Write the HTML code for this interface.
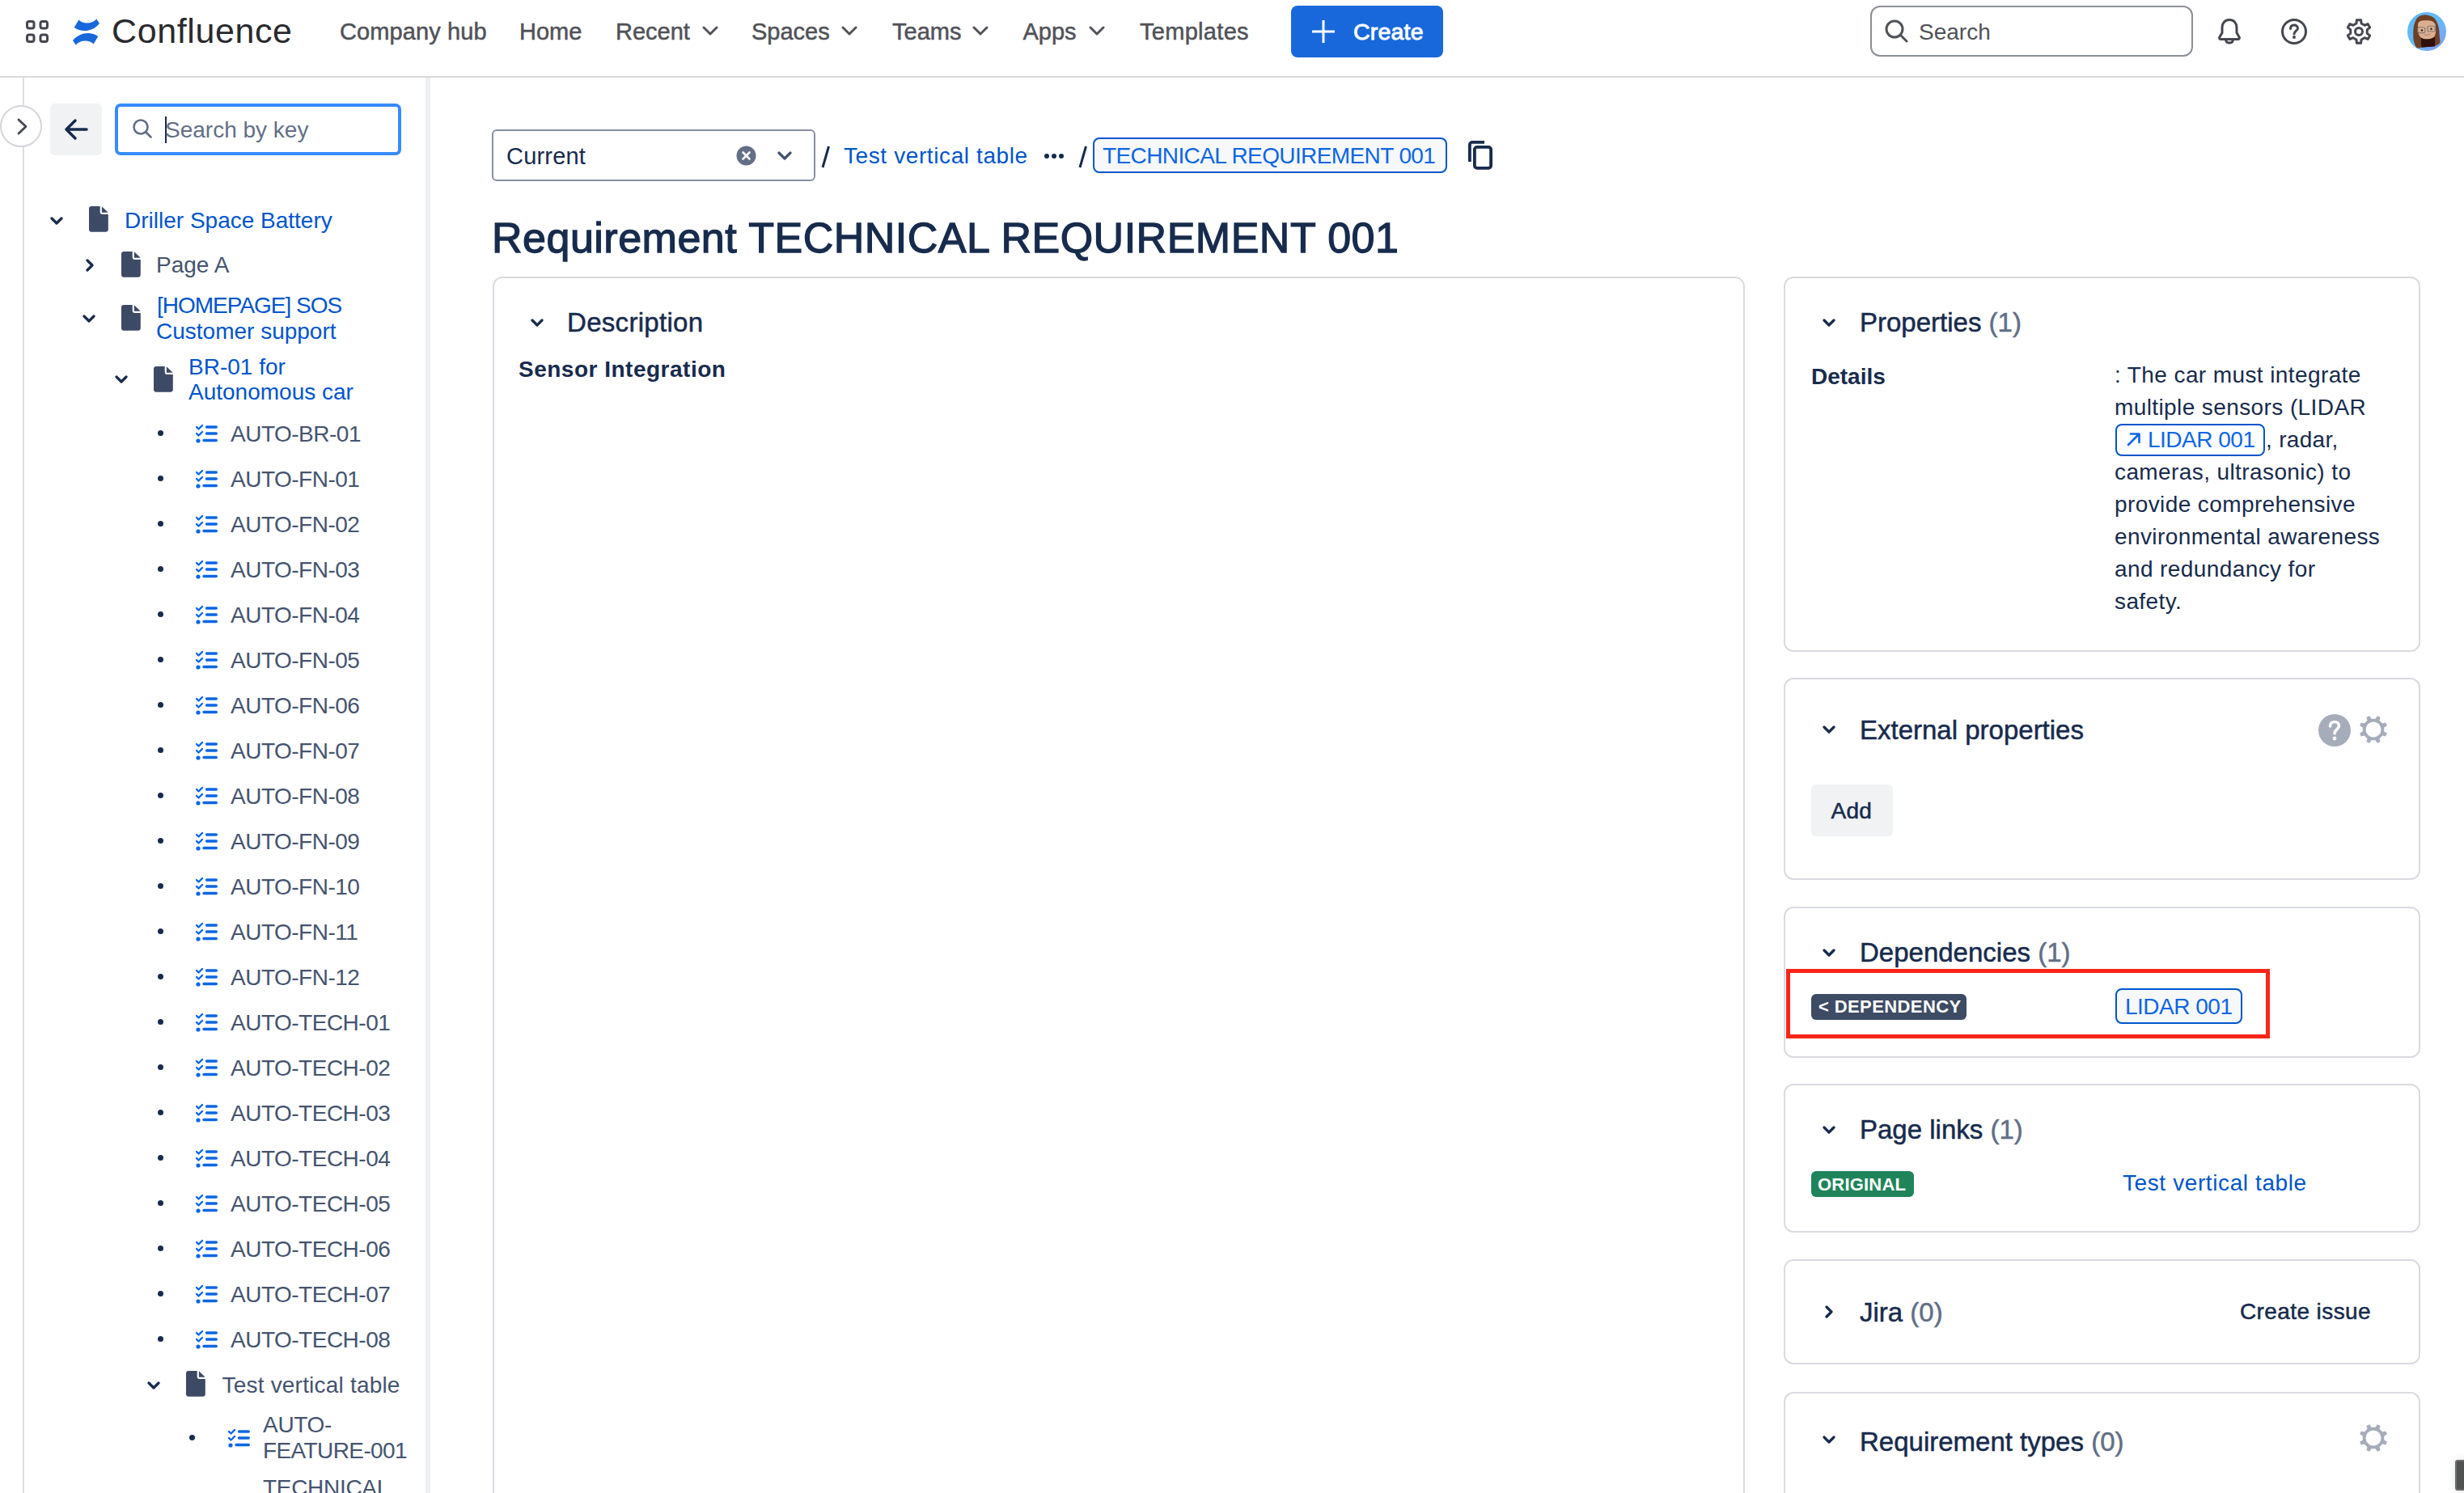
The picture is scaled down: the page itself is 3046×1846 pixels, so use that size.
<!DOCTYPE html>
<html><head><meta charset="utf-8">
<style>
html,body{margin:0;padding:0;background:#ffffff;}
html{overflow:hidden;}
body{width:3046px;height:1846px;position:relative;overflow:hidden;font-family:"Liberation Sans",sans-serif;}
.t{position:absolute;white-space:nowrap;}
.b{position:absolute;}
</style></head><body>
<div class="b" style="left:0px;top:94px;width:3046px;height:2px;background:#dadada"></div>
<svg class="b" style="left:32px;top:25px;" width="28" height="28" viewBox="0 0 28 28"><rect x="1.5" y="1.5" width="8.5" height="8.5" rx="2.5" fill="none" stroke="#44474f" stroke-width="3"/><rect x="18.0" y="1.5" width="8.5" height="8.5" rx="2.5" fill="none" stroke="#44474f" stroke-width="3"/><rect x="1.5" y="18.0" width="8.5" height="8.5" rx="2.5" fill="none" stroke="#44474f" stroke-width="3"/><rect x="18.0" y="18.0" width="8.5" height="8.5" rx="2.5" fill="none" stroke="#44474f" stroke-width="3"/></svg>
<svg class="b" style="left:90px;top:23px;" width="34" height="33" viewBox="0 0 34 33"><path id="lg" d="M7.4 1.4 C 12 7, 24 7, 29.3 0.5 L 33 6 C 24 17, 10 17, 1.7 11 Z" fill="#1868db"/><path d="M7.4 1.4 C 12 7, 24 7, 29.3 0.5 L 33 6 C 24 17, 10 17, 1.7 11 Z" fill="#1868db" transform="rotate(180 16.5 16.5)"/></svg>
<div class="t" style="left:138px;top:17.2px;font-size:43px;line-height:43px;color:#292a2e;font-weight:400;letter-spacing:0.6px">Confluence</div>
<div class="t" style="left:420px;top:24.7px;font-size:29px;line-height:29px;color:#505258;font-weight:400;-webkit-text-stroke:0.5px;letter-spacing:0.1px">Company hub</div>
<div class="t" style="left:642px;top:24.7px;font-size:29px;line-height:29px;color:#505258;font-weight:400;-webkit-text-stroke:0.5px;">Home</div>
<div class="t" style="left:761px;top:24.7px;font-size:29px;line-height:29px;color:#505258;font-weight:400;-webkit-text-stroke:0.5px;">Recent</div>
<div class="t" style="left:929px;top:24.7px;font-size:29px;line-height:29px;color:#505258;font-weight:400;-webkit-text-stroke:0.5px;">Spaces</div>
<div class="t" style="left:1103px;top:24.7px;font-size:29px;line-height:29px;color:#505258;font-weight:400;-webkit-text-stroke:0.5px;">Teams</div>
<div class="t" style="left:1264.5px;top:24.7px;font-size:29px;line-height:29px;color:#505258;font-weight:400;-webkit-text-stroke:0.5px;">Apps</div>
<div class="t" style="left:1409px;top:24.7px;font-size:29px;line-height:29px;color:#505258;font-weight:400;-webkit-text-stroke:0.5px;letter-spacing:0.3px">Templates</div>
<svg class="b" style="left:868px;top:32px;" width="20" height="12" viewBox="0 0 20 12"><path d="M2 2 L10 10 L18 2" fill="none" stroke="#505258" stroke-width="3" stroke-linecap="round" stroke-linejoin="round"/></svg>
<svg class="b" style="left:1040px;top:32px;" width="20" height="12" viewBox="0 0 20 12"><path d="M2 2 L10 10 L18 2" fill="none" stroke="#505258" stroke-width="3" stroke-linecap="round" stroke-linejoin="round"/></svg>
<svg class="b" style="left:1202px;top:32px;" width="20" height="12" viewBox="0 0 20 12"><path d="M2 2 L10 10 L18 2" fill="none" stroke="#505258" stroke-width="3" stroke-linecap="round" stroke-linejoin="round"/></svg>
<svg class="b" style="left:1346px;top:32px;" width="20" height="12" viewBox="0 0 20 12"><path d="M2 2 L10 10 L18 2" fill="none" stroke="#505258" stroke-width="3" stroke-linecap="round" stroke-linejoin="round"/></svg>
<div class="b" style="left:1596px;top:7px;width:188px;height:64px;background:#1868db;border-radius:8px"></div>
<svg class="b" style="left:1622px;top:25px;" width="28" height="28" viewBox="0 0 28 28"><path d="M14 0 V28 M0 14 H28" stroke="#fff" stroke-width="3"/></svg>
<div class="t" style="left:1673px;top:24.7px;font-size:28.5px;line-height:28.5px;color:#ffffff;font-weight:400;-webkit-text-stroke:0.9px;letter-spacing:0.2px">Create</div>
<div class="b" style="left:2312px;top:7px;width:399px;height:63px;border:2px solid #8c8f97;border-radius:12px;box-sizing:border-box"></div>
<svg class="b" style="left:2330px;top:24px;" width="30" height="30" viewBox="0 0 30 30"><circle cx="12" cy="12" r="10" fill="none" stroke="#505258" stroke-width="3"/><path d="M19.5 19.5 L27 27" stroke="#505258" stroke-width="3" stroke-linecap="round"/></svg>
<div class="t" style="left:2372px;top:25.8px;font-size:28px;line-height:28px;color:#505258;font-weight:400;">Search</div>
<svg class="b" style="left:2742px;top:23px;" width="28" height="32" viewBox="0 0 28 32"><path d="M14 1.5 C 8.5 1.5, 5 5.5, 5 11 V 17.5 L 1.8 23 C 1.2 24.2, 2 25.5, 3.3 25.5 H 24.7 C 26 25.5, 26.8 24.2, 26.2 23 L 23 17.5 V 11 C 23 5.5, 19.5 1.5, 14 1.5 Z" fill="none" stroke="#44474f" stroke-width="3" stroke-linejoin="round"/><path d="M9.8 27.3 C 10.5 31, 17.5 31, 18.2 27.3" fill="none" stroke="#44474f" stroke-width="3" stroke-linecap="round"/></svg>
<svg class="b" style="left:2820px;top:23px;" width="32" height="32" viewBox="0 0 32 32"><circle cx="16" cy="16" r="14.5" fill="none" stroke="#44474f" stroke-width="3"/><path d="M11.5 12.5 C 11.5 9.5, 13.5 8, 16 8 C 18.5 8, 20.5 9.5, 20.5 12 C 20.5 15, 16 15.5, 16 19" fill="none" stroke="#44474f" stroke-width="3" stroke-linecap="round"/><circle cx="16" cy="23" r="2" fill="#44474f"/></svg>
<svg class="b" style="left:2900px;top:23px;" width="32" height="32" viewBox="0 0 32 32"><path d="M19.10 26.03 L18.60 30.27 L13.40 30.27 L12.90 26.03 L8.86 23.70 L4.94 25.38 L2.35 20.88 L5.76 18.33 L5.76 13.67 L2.35 11.12 L4.94 6.62 L8.86 8.30 L12.90 5.97 L13.40 1.73 L18.60 1.73 L19.10 5.97 L23.14 8.30 L27.06 6.62 L29.65 11.12 L26.24 13.67 L26.24 18.33 L29.65 20.88 L27.06 25.38 L23.14 23.70 Z" fill="none" stroke="#44474f" stroke-width="3" stroke-linejoin="round"/><circle cx="16" cy="16" r="4.5" fill="none" stroke="#44474f" stroke-width="3"/></svg>
<svg class="b" style="left:2976px;top:15px;" width="48" height="48" viewBox="0 0 48 48"><defs><linearGradient id="avg" x1="0" y1="0" x2="1" y2="1"><stop offset="0" stop-color="#62b6fa"/><stop offset="0.5" stop-color="#63bafa"/><stop offset="1" stop-color="#8d98f6"/></linearGradient><clipPath id="avc"><circle cx="24" cy="24" r="24"/></clipPath></defs><circle cx="24" cy="24" r="24" fill="url(#avg)"/><g clip-path="url(#avc)"><path d="M22 3.2 C 15 3.5, 11 7, 10 11 C 7 17, 7.3 24, 7.3 28 C 7 35, 9 41, 12 44.4 L 22 43.2 L 33 42 C 37 41, 40 39, 40.6 37.2 C 40 32, 39.4 27, 39.4 23 C 38.5 18, 37.5 14, 36.2 12.3 C 35 8, 31 4, 22 3.2 Z" fill="#6e4024"/><path d="M16.9 32 C 17 38, 17 42, 18 43.5 L 34 42.5 C 34.2 38, 34.2 34, 34 31 Z" fill="#2e0f0a"/><path d="M13 16 C 13 11, 17 10.3, 23 10.3 C 30 10.3, 35 12, 35 18 C 35.5 24, 35 29, 32 31.5 C 29 33.5, 24 33.5, 20 33 C 15 31.5, 13.2 27, 13 22 Z" fill="#dcae90"/><path d="M12 14 C 15 8, 24 6, 34 12 L 37 13 C 33 5, 16 3, 11 13 Z" fill="#6e4024"/><rect x="12.8" y="18.8" width="9" height="6.8" rx="2.2" fill="none" stroke="#7d7a76" stroke-width="1.1"/><rect x="24.8" y="17.2" width="9.5" height="6.8" rx="2.2" fill="none" stroke="#7d7a76" stroke-width="1.1"/><circle cx="18" cy="22.5" r="1.3" fill="#2a2a2a"/><circle cx="29.5" cy="20.8" r="1.3" fill="#2a2a2a"/><path d="M20.5 27.5 C 23 28.8, 26 28.5, 28.5 27" fill="none" stroke="#b07d64" stroke-width="1"/></g></svg>
<div class="b" style="left:28px;top:96px;width:1px;height:1750px;background:#dadada"></div>
<div class="b" style="left:29px;top:96px;width:1px;height:1750px;background:#e3e3e3"></div>
<div class="b" style="left:526px;top:96px;width:6px;height:1750px;background:#eeeff1"></div>
<div class="b" style="left:0px;top:130px;width:52px;height:52px;border-radius:50%;border:2px solid #d4d6da;background:#fff;box-sizing:border-box"></div>
<svg class="b" style="left:21px;top:146px;" width="13" height="21" viewBox="0 0 13 21"><path d="M2 2 L11 10.5 L2 19" fill="none" stroke="#44474f" stroke-width="2.8" stroke-linecap="round" stroke-linejoin="round"/></svg>
<div class="b" style="left:62px;top:128px;width:64px;height:64px;background:#f1f2f4;border-radius:6px"></div>
<svg class="b" style="left:79px;top:146px;" width="30" height="28" viewBox="0 0 30 28"><path d="M28 14 H3 M14 3 L3 14 L14 25" fill="none" stroke="#172b4d" stroke-width="3.5" stroke-linecap="round" stroke-linejoin="round"/></svg>
<div class="b" style="left:142px;top:128px;width:354px;height:64px;border:4px solid #388bff;border-radius:7px;box-sizing:border-box;background:#fff"></div>
<svg class="b" style="left:163px;top:146px;" width="26" height="26" viewBox="0 0 26 26"><circle cx="11" cy="11" r="8.5" fill="none" stroke="#626f86" stroke-width="2.6"/><path d="M17.5 17.5 L23.5 23.5" stroke="#626f86" stroke-width="2.6" stroke-linecap="round"/></svg>
<div class="b" style="left:204px;top:144px;width:2px;height:33px;background:#172b4d"></div>
<div class="t" style="left:204px;top:146.8px;font-size:28px;line-height:28px;color:#626f86;font-weight:400;">Search by key</div>
<svg class="b" style="left:62px;top:268px;" width="16" height="11" viewBox="0 0 16 11"><path d="M2 2 L8 8 L14 2" fill="none" stroke="#172b4d" stroke-width="3.2" stroke-linecap="round" stroke-linejoin="round"/></svg>
<svg class="b" style="left:110px;top:255px;" width="24" height="32" viewBox="0 0 24 32"><path d="M3 0 H13.7 V7 C13.7 8.7 14.9 10 16.6 10 H23.8 V28.8 C23.8 30.5 22.4 31.8 20.8 31.8 H3 C1.3 31.8 0 30.5 0 28.8 V3 C0 1.3 1.3 0 3 0 Z" fill="#3c4a65"/><path d="M15.9 0.2 L23.7 7.8 H15.9 Z" fill="#3c4a65"/></svg>
<div class="t" style="left:154px;top:258.8px;font-size:28px;line-height:28px;color:#0055cc;font-weight:400;">Driller Space Battery</div>
<svg class="b" style="left:106px;top:320px;" width="11" height="16" viewBox="0 0 11 16"><path d="M2 2 L8 8 L2 14" fill="none" stroke="#172b4d" stroke-width="3.2" stroke-linecap="round" stroke-linejoin="round"/></svg>
<svg class="b" style="left:150px;top:311px;" width="24" height="32" viewBox="0 0 24 32"><path d="M3 0 H13.7 V7 C13.7 8.7 14.9 10 16.6 10 H23.8 V28.8 C23.8 30.5 22.4 31.8 20.8 31.8 H3 C1.3 31.8 0 30.5 0 28.8 V3 C0 1.3 1.3 0 3 0 Z" fill="#3c4a65"/><path d="M15.9 0.2 L23.7 7.8 H15.9 Z" fill="#3c4a65"/></svg>
<div class="t" style="left:193px;top:314.0px;font-size:28px;line-height:28px;color:#44546f;font-weight:400;">Page A</div>
<svg class="b" style="left:102px;top:389px;" width="16" height="11" viewBox="0 0 16 11"><path d="M2 2 L8 8 L14 2" fill="none" stroke="#172b4d" stroke-width="3.2" stroke-linecap="round" stroke-linejoin="round"/></svg>
<svg class="b" style="left:150px;top:377px;" width="24" height="32" viewBox="0 0 24 32"><path d="M3 0 H13.7 V7 C13.7 8.7 14.9 10 16.6 10 H23.8 V28.8 C23.8 30.5 22.4 31.8 20.8 31.8 H3 C1.3 31.8 0 30.5 0 28.8 V3 C0 1.3 1.3 0 3 0 Z" fill="#3c4a65"/><path d="M15.9 0.2 L23.7 7.8 H15.9 Z" fill="#3c4a65"/></svg>
<div class="t" style="left:194px;top:364.1px;font-size:28px;line-height:28px;color:#0055cc;font-weight:400;letter-spacing:-1px">[HOMEPAGE] SOS</div>
<div class="t" style="left:193px;top:395.6px;font-size:28px;line-height:28px;color:#0055cc;font-weight:400;">Customer support</div>
<svg class="b" style="left:142px;top:464px;" width="16" height="11" viewBox="0 0 16 11"><path d="M2 2 L8 8 L14 2" fill="none" stroke="#172b4d" stroke-width="3.2" stroke-linecap="round" stroke-linejoin="round"/></svg>
<svg class="b" style="left:190px;top:453px;" width="24" height="32" viewBox="0 0 24 32"><path d="M3 0 H13.7 V7 C13.7 8.7 14.9 10 16.6 10 H23.8 V28.8 C23.8 30.5 22.4 31.8 20.8 31.8 H3 C1.3 31.8 0 30.5 0 28.8 V3 C0 1.3 1.3 0 3 0 Z" fill="#3c4a65"/><path d="M15.9 0.2 L23.7 7.8 H15.9 Z" fill="#3c4a65"/></svg>
<div class="t" style="left:233px;top:439.9px;font-size:28px;line-height:28px;color:#0055cc;font-weight:400;">BR-01 for</div>
<div class="t" style="left:233px;top:471.3px;font-size:28px;line-height:28px;color:#0055cc;font-weight:400;">Autonomous car</div>
<div class="b" style="left:194.5px;top:532.2px;width:7px;height:7px;border-radius:50%;background:#172b4d"></div>
<svg class="b" style="left:242px;top:524.2px;" width="28" height="24" viewBox="0 0 28 24"><path d="M1 4 L3.5 6.5 L8 2 M1 12 L3.5 14.5 L8 10" fill="none" stroke="#0c66e4" stroke-width="2.4" stroke-linecap="round" stroke-linejoin="round"/><circle cx="3" cy="21" r="2.6" fill="#0c66e4"/><path d="M13.5 4 H25.3 M13.5 12 H25.3 M10 20.5 H25.3" stroke="#0c66e4" stroke-width="3.4" stroke-linecap="round"/></svg>
<div class="t" style="left:285px;top:522.5px;font-size:28px;line-height:28px;color:#44546f;font-weight:400;letter-spacing:-0.5px">AUTO-BR-01</div>
<div class="b" style="left:194.5px;top:588.2px;width:7px;height:7px;border-radius:50%;background:#172b4d"></div>
<svg class="b" style="left:242px;top:580.2px;" width="28" height="24" viewBox="0 0 28 24"><path d="M1 4 L3.5 6.5 L8 2 M1 12 L3.5 14.5 L8 10" fill="none" stroke="#0c66e4" stroke-width="2.4" stroke-linecap="round" stroke-linejoin="round"/><circle cx="3" cy="21" r="2.6" fill="#0c66e4"/><path d="M13.5 4 H25.3 M13.5 12 H25.3 M10 20.5 H25.3" stroke="#0c66e4" stroke-width="3.4" stroke-linecap="round"/></svg>
<div class="t" style="left:285px;top:578.5px;font-size:28px;line-height:28px;color:#44546f;font-weight:400;letter-spacing:-0.5px">AUTO-FN-01</div>
<div class="b" style="left:194.5px;top:644.2px;width:7px;height:7px;border-radius:50%;background:#172b4d"></div>
<svg class="b" style="left:242px;top:636.2px;" width="28" height="24" viewBox="0 0 28 24"><path d="M1 4 L3.5 6.5 L8 2 M1 12 L3.5 14.5 L8 10" fill="none" stroke="#0c66e4" stroke-width="2.4" stroke-linecap="round" stroke-linejoin="round"/><circle cx="3" cy="21" r="2.6" fill="#0c66e4"/><path d="M13.5 4 H25.3 M13.5 12 H25.3 M10 20.5 H25.3" stroke="#0c66e4" stroke-width="3.4" stroke-linecap="round"/></svg>
<div class="t" style="left:285px;top:634.5px;font-size:28px;line-height:28px;color:#44546f;font-weight:400;letter-spacing:-0.5px">AUTO-FN-02</div>
<div class="b" style="left:194.5px;top:700.2px;width:7px;height:7px;border-radius:50%;background:#172b4d"></div>
<svg class="b" style="left:242px;top:692.2px;" width="28" height="24" viewBox="0 0 28 24"><path d="M1 4 L3.5 6.5 L8 2 M1 12 L3.5 14.5 L8 10" fill="none" stroke="#0c66e4" stroke-width="2.4" stroke-linecap="round" stroke-linejoin="round"/><circle cx="3" cy="21" r="2.6" fill="#0c66e4"/><path d="M13.5 4 H25.3 M13.5 12 H25.3 M10 20.5 H25.3" stroke="#0c66e4" stroke-width="3.4" stroke-linecap="round"/></svg>
<div class="t" style="left:285px;top:690.5px;font-size:28px;line-height:28px;color:#44546f;font-weight:400;letter-spacing:-0.5px">AUTO-FN-03</div>
<div class="b" style="left:194.5px;top:756.2px;width:7px;height:7px;border-radius:50%;background:#172b4d"></div>
<svg class="b" style="left:242px;top:748.2px;" width="28" height="24" viewBox="0 0 28 24"><path d="M1 4 L3.5 6.5 L8 2 M1 12 L3.5 14.5 L8 10" fill="none" stroke="#0c66e4" stroke-width="2.4" stroke-linecap="round" stroke-linejoin="round"/><circle cx="3" cy="21" r="2.6" fill="#0c66e4"/><path d="M13.5 4 H25.3 M13.5 12 H25.3 M10 20.5 H25.3" stroke="#0c66e4" stroke-width="3.4" stroke-linecap="round"/></svg>
<div class="t" style="left:285px;top:746.5px;font-size:28px;line-height:28px;color:#44546f;font-weight:400;letter-spacing:-0.5px">AUTO-FN-04</div>
<div class="b" style="left:194.5px;top:812.2px;width:7px;height:7px;border-radius:50%;background:#172b4d"></div>
<svg class="b" style="left:242px;top:804.2px;" width="28" height="24" viewBox="0 0 28 24"><path d="M1 4 L3.5 6.5 L8 2 M1 12 L3.5 14.5 L8 10" fill="none" stroke="#0c66e4" stroke-width="2.4" stroke-linecap="round" stroke-linejoin="round"/><circle cx="3" cy="21" r="2.6" fill="#0c66e4"/><path d="M13.5 4 H25.3 M13.5 12 H25.3 M10 20.5 H25.3" stroke="#0c66e4" stroke-width="3.4" stroke-linecap="round"/></svg>
<div class="t" style="left:285px;top:802.5px;font-size:28px;line-height:28px;color:#44546f;font-weight:400;letter-spacing:-0.5px">AUTO-FN-05</div>
<div class="b" style="left:194.5px;top:868.2px;width:7px;height:7px;border-radius:50%;background:#172b4d"></div>
<svg class="b" style="left:242px;top:860.2px;" width="28" height="24" viewBox="0 0 28 24"><path d="M1 4 L3.5 6.5 L8 2 M1 12 L3.5 14.5 L8 10" fill="none" stroke="#0c66e4" stroke-width="2.4" stroke-linecap="round" stroke-linejoin="round"/><circle cx="3" cy="21" r="2.6" fill="#0c66e4"/><path d="M13.5 4 H25.3 M13.5 12 H25.3 M10 20.5 H25.3" stroke="#0c66e4" stroke-width="3.4" stroke-linecap="round"/></svg>
<div class="t" style="left:285px;top:858.5px;font-size:28px;line-height:28px;color:#44546f;font-weight:400;letter-spacing:-0.5px">AUTO-FN-06</div>
<div class="b" style="left:194.5px;top:924.2px;width:7px;height:7px;border-radius:50%;background:#172b4d"></div>
<svg class="b" style="left:242px;top:916.2px;" width="28" height="24" viewBox="0 0 28 24"><path d="M1 4 L3.5 6.5 L8 2 M1 12 L3.5 14.5 L8 10" fill="none" stroke="#0c66e4" stroke-width="2.4" stroke-linecap="round" stroke-linejoin="round"/><circle cx="3" cy="21" r="2.6" fill="#0c66e4"/><path d="M13.5 4 H25.3 M13.5 12 H25.3 M10 20.5 H25.3" stroke="#0c66e4" stroke-width="3.4" stroke-linecap="round"/></svg>
<div class="t" style="left:285px;top:914.5px;font-size:28px;line-height:28px;color:#44546f;font-weight:400;letter-spacing:-0.5px">AUTO-FN-07</div>
<div class="b" style="left:194.5px;top:980.2px;width:7px;height:7px;border-radius:50%;background:#172b4d"></div>
<svg class="b" style="left:242px;top:972.2px;" width="28" height="24" viewBox="0 0 28 24"><path d="M1 4 L3.5 6.5 L8 2 M1 12 L3.5 14.5 L8 10" fill="none" stroke="#0c66e4" stroke-width="2.4" stroke-linecap="round" stroke-linejoin="round"/><circle cx="3" cy="21" r="2.6" fill="#0c66e4"/><path d="M13.5 4 H25.3 M13.5 12 H25.3 M10 20.5 H25.3" stroke="#0c66e4" stroke-width="3.4" stroke-linecap="round"/></svg>
<div class="t" style="left:285px;top:970.5px;font-size:28px;line-height:28px;color:#44546f;font-weight:400;letter-spacing:-0.5px">AUTO-FN-08</div>
<div class="b" style="left:194.5px;top:1036.2px;width:7px;height:7px;border-radius:50%;background:#172b4d"></div>
<svg class="b" style="left:242px;top:1028.2px;" width="28" height="24" viewBox="0 0 28 24"><path d="M1 4 L3.5 6.5 L8 2 M1 12 L3.5 14.5 L8 10" fill="none" stroke="#0c66e4" stroke-width="2.4" stroke-linecap="round" stroke-linejoin="round"/><circle cx="3" cy="21" r="2.6" fill="#0c66e4"/><path d="M13.5 4 H25.3 M13.5 12 H25.3 M10 20.5 H25.3" stroke="#0c66e4" stroke-width="3.4" stroke-linecap="round"/></svg>
<div class="t" style="left:285px;top:1026.5px;font-size:28px;line-height:28px;color:#44546f;font-weight:400;letter-spacing:-0.5px">AUTO-FN-09</div>
<div class="b" style="left:194.5px;top:1092.2px;width:7px;height:7px;border-radius:50%;background:#172b4d"></div>
<svg class="b" style="left:242px;top:1084.2px;" width="28" height="24" viewBox="0 0 28 24"><path d="M1 4 L3.5 6.5 L8 2 M1 12 L3.5 14.5 L8 10" fill="none" stroke="#0c66e4" stroke-width="2.4" stroke-linecap="round" stroke-linejoin="round"/><circle cx="3" cy="21" r="2.6" fill="#0c66e4"/><path d="M13.5 4 H25.3 M13.5 12 H25.3 M10 20.5 H25.3" stroke="#0c66e4" stroke-width="3.4" stroke-linecap="round"/></svg>
<div class="t" style="left:285px;top:1082.5px;font-size:28px;line-height:28px;color:#44546f;font-weight:400;letter-spacing:-0.5px">AUTO-FN-10</div>
<div class="b" style="left:194.5px;top:1148.2px;width:7px;height:7px;border-radius:50%;background:#172b4d"></div>
<svg class="b" style="left:242px;top:1140.2px;" width="28" height="24" viewBox="0 0 28 24"><path d="M1 4 L3.5 6.5 L8 2 M1 12 L3.5 14.5 L8 10" fill="none" stroke="#0c66e4" stroke-width="2.4" stroke-linecap="round" stroke-linejoin="round"/><circle cx="3" cy="21" r="2.6" fill="#0c66e4"/><path d="M13.5 4 H25.3 M13.5 12 H25.3 M10 20.5 H25.3" stroke="#0c66e4" stroke-width="3.4" stroke-linecap="round"/></svg>
<div class="t" style="left:285px;top:1138.5px;font-size:28px;line-height:28px;color:#44546f;font-weight:400;letter-spacing:-0.5px">AUTO-FN-11</div>
<div class="b" style="left:194.5px;top:1204.2px;width:7px;height:7px;border-radius:50%;background:#172b4d"></div>
<svg class="b" style="left:242px;top:1196.2px;" width="28" height="24" viewBox="0 0 28 24"><path d="M1 4 L3.5 6.5 L8 2 M1 12 L3.5 14.5 L8 10" fill="none" stroke="#0c66e4" stroke-width="2.4" stroke-linecap="round" stroke-linejoin="round"/><circle cx="3" cy="21" r="2.6" fill="#0c66e4"/><path d="M13.5 4 H25.3 M13.5 12 H25.3 M10 20.5 H25.3" stroke="#0c66e4" stroke-width="3.4" stroke-linecap="round"/></svg>
<div class="t" style="left:285px;top:1194.5px;font-size:28px;line-height:28px;color:#44546f;font-weight:400;letter-spacing:-0.5px">AUTO-FN-12</div>
<div class="b" style="left:194.5px;top:1260.2px;width:7px;height:7px;border-radius:50%;background:#172b4d"></div>
<svg class="b" style="left:242px;top:1252.2px;" width="28" height="24" viewBox="0 0 28 24"><path d="M1 4 L3.5 6.5 L8 2 M1 12 L3.5 14.5 L8 10" fill="none" stroke="#0c66e4" stroke-width="2.4" stroke-linecap="round" stroke-linejoin="round"/><circle cx="3" cy="21" r="2.6" fill="#0c66e4"/><path d="M13.5 4 H25.3 M13.5 12 H25.3 M10 20.5 H25.3" stroke="#0c66e4" stroke-width="3.4" stroke-linecap="round"/></svg>
<div class="t" style="left:285px;top:1250.5px;font-size:28px;line-height:28px;color:#44546f;font-weight:400;letter-spacing:-0.5px">AUTO-TECH-01</div>
<div class="b" style="left:194.5px;top:1316.2px;width:7px;height:7px;border-radius:50%;background:#172b4d"></div>
<svg class="b" style="left:242px;top:1308.2px;" width="28" height="24" viewBox="0 0 28 24"><path d="M1 4 L3.5 6.5 L8 2 M1 12 L3.5 14.5 L8 10" fill="none" stroke="#0c66e4" stroke-width="2.4" stroke-linecap="round" stroke-linejoin="round"/><circle cx="3" cy="21" r="2.6" fill="#0c66e4"/><path d="M13.5 4 H25.3 M13.5 12 H25.3 M10 20.5 H25.3" stroke="#0c66e4" stroke-width="3.4" stroke-linecap="round"/></svg>
<div class="t" style="left:285px;top:1306.5px;font-size:28px;line-height:28px;color:#44546f;font-weight:400;letter-spacing:-0.5px">AUTO-TECH-02</div>
<div class="b" style="left:194.5px;top:1372.2px;width:7px;height:7px;border-radius:50%;background:#172b4d"></div>
<svg class="b" style="left:242px;top:1364.2px;" width="28" height="24" viewBox="0 0 28 24"><path d="M1 4 L3.5 6.5 L8 2 M1 12 L3.5 14.5 L8 10" fill="none" stroke="#0c66e4" stroke-width="2.4" stroke-linecap="round" stroke-linejoin="round"/><circle cx="3" cy="21" r="2.6" fill="#0c66e4"/><path d="M13.5 4 H25.3 M13.5 12 H25.3 M10 20.5 H25.3" stroke="#0c66e4" stroke-width="3.4" stroke-linecap="round"/></svg>
<div class="t" style="left:285px;top:1362.5px;font-size:28px;line-height:28px;color:#44546f;font-weight:400;letter-spacing:-0.5px">AUTO-TECH-03</div>
<div class="b" style="left:194.5px;top:1428.2px;width:7px;height:7px;border-radius:50%;background:#172b4d"></div>
<svg class="b" style="left:242px;top:1420.2px;" width="28" height="24" viewBox="0 0 28 24"><path d="M1 4 L3.5 6.5 L8 2 M1 12 L3.5 14.5 L8 10" fill="none" stroke="#0c66e4" stroke-width="2.4" stroke-linecap="round" stroke-linejoin="round"/><circle cx="3" cy="21" r="2.6" fill="#0c66e4"/><path d="M13.5 4 H25.3 M13.5 12 H25.3 M10 20.5 H25.3" stroke="#0c66e4" stroke-width="3.4" stroke-linecap="round"/></svg>
<div class="t" style="left:285px;top:1418.5px;font-size:28px;line-height:28px;color:#44546f;font-weight:400;letter-spacing:-0.5px">AUTO-TECH-04</div>
<div class="b" style="left:194.5px;top:1484.2px;width:7px;height:7px;border-radius:50%;background:#172b4d"></div>
<svg class="b" style="left:242px;top:1476.2px;" width="28" height="24" viewBox="0 0 28 24"><path d="M1 4 L3.5 6.5 L8 2 M1 12 L3.5 14.5 L8 10" fill="none" stroke="#0c66e4" stroke-width="2.4" stroke-linecap="round" stroke-linejoin="round"/><circle cx="3" cy="21" r="2.6" fill="#0c66e4"/><path d="M13.5 4 H25.3 M13.5 12 H25.3 M10 20.5 H25.3" stroke="#0c66e4" stroke-width="3.4" stroke-linecap="round"/></svg>
<div class="t" style="left:285px;top:1474.5px;font-size:28px;line-height:28px;color:#44546f;font-weight:400;letter-spacing:-0.5px">AUTO-TECH-05</div>
<div class="b" style="left:194.5px;top:1540.2px;width:7px;height:7px;border-radius:50%;background:#172b4d"></div>
<svg class="b" style="left:242px;top:1532.2px;" width="28" height="24" viewBox="0 0 28 24"><path d="M1 4 L3.5 6.5 L8 2 M1 12 L3.5 14.5 L8 10" fill="none" stroke="#0c66e4" stroke-width="2.4" stroke-linecap="round" stroke-linejoin="round"/><circle cx="3" cy="21" r="2.6" fill="#0c66e4"/><path d="M13.5 4 H25.3 M13.5 12 H25.3 M10 20.5 H25.3" stroke="#0c66e4" stroke-width="3.4" stroke-linecap="round"/></svg>
<div class="t" style="left:285px;top:1530.5px;font-size:28px;line-height:28px;color:#44546f;font-weight:400;letter-spacing:-0.5px">AUTO-TECH-06</div>
<div class="b" style="left:194.5px;top:1596.2px;width:7px;height:7px;border-radius:50%;background:#172b4d"></div>
<svg class="b" style="left:242px;top:1588.2px;" width="28" height="24" viewBox="0 0 28 24"><path d="M1 4 L3.5 6.5 L8 2 M1 12 L3.5 14.5 L8 10" fill="none" stroke="#0c66e4" stroke-width="2.4" stroke-linecap="round" stroke-linejoin="round"/><circle cx="3" cy="21" r="2.6" fill="#0c66e4"/><path d="M13.5 4 H25.3 M13.5 12 H25.3 M10 20.5 H25.3" stroke="#0c66e4" stroke-width="3.4" stroke-linecap="round"/></svg>
<div class="t" style="left:285px;top:1586.5px;font-size:28px;line-height:28px;color:#44546f;font-weight:400;letter-spacing:-0.5px">AUTO-TECH-07</div>
<div class="b" style="left:194.5px;top:1652.2px;width:7px;height:7px;border-radius:50%;background:#172b4d"></div>
<svg class="b" style="left:242px;top:1644.2px;" width="28" height="24" viewBox="0 0 28 24"><path d="M1 4 L3.5 6.5 L8 2 M1 12 L3.5 14.5 L8 10" fill="none" stroke="#0c66e4" stroke-width="2.4" stroke-linecap="round" stroke-linejoin="round"/><circle cx="3" cy="21" r="2.6" fill="#0c66e4"/><path d="M13.5 4 H25.3 M13.5 12 H25.3 M10 20.5 H25.3" stroke="#0c66e4" stroke-width="3.4" stroke-linecap="round"/></svg>
<div class="t" style="left:285px;top:1642.5px;font-size:28px;line-height:28px;color:#44546f;font-weight:400;letter-spacing:-0.5px">AUTO-TECH-08</div>
<svg class="b" style="left:182px;top:1708px;" width="16" height="11" viewBox="0 0 16 11"><path d="M2 2 L8 8 L14 2" fill="none" stroke="#172b4d" stroke-width="3.2" stroke-linecap="round" stroke-linejoin="round"/></svg>
<svg class="b" style="left:230px;top:1695px;" width="24" height="32" viewBox="0 0 24 32"><path d="M3 0 H13.7 V7 C13.7 8.7 14.9 10 16.6 10 H23.8 V28.8 C23.8 30.5 22.4 31.8 20.8 31.8 H3 C1.3 31.8 0 30.5 0 28.8 V3 C0 1.3 1.3 0 3 0 Z" fill="#3c4a65"/><path d="M15.9 0.2 L23.7 7.8 H15.9 Z" fill="#3c4a65"/></svg>
<div class="t" style="left:274.5px;top:1699.3px;font-size:28px;line-height:28px;color:#44546f;font-weight:400;letter-spacing:0.2px">Test vertical table</div>
<div class="b" style="left:234px;top:1774px;width:7px;height:7px;border-radius:50%;background:#172b4d"></div>
<svg class="b" style="left:282px;top:1766px;" width="28" height="24" viewBox="0 0 28 24"><path d="M1 4 L3.5 6.5 L8 2 M1 12 L3.5 14.5 L8 10" fill="none" stroke="#0c66e4" stroke-width="2.4" stroke-linecap="round" stroke-linejoin="round"/><circle cx="3" cy="21" r="2.6" fill="#0c66e4"/><path d="M13.5 4 H25.3 M13.5 12 H25.3 M10 20.5 H25.3" stroke="#0c66e4" stroke-width="3.4" stroke-linecap="round"/></svg>
<div class="t" style="left:325px;top:1748.3px;font-size:28px;line-height:28px;color:#44546f;font-weight:400;letter-spacing:-0.3px">AUTO-</div>
<div class="t" style="left:325px;top:1780.3px;font-size:28px;line-height:28px;color:#44546f;font-weight:400;letter-spacing:-0.6px">FEATURE-001</div>
<div class="t" style="left:325px;top:1825.8px;font-size:28px;line-height:28px;color:#44546f;font-weight:400;letter-spacing:-0.3px">TECHNICAL</div>
<div class="b" style="left:608px;top:160px;width:400px;height:64px;border:2px solid #8590a2;border-radius:6px;box-sizing:border-box"></div>
<div class="t" style="left:626px;top:178.5px;font-size:29px;line-height:29px;color:#172b4d;font-weight:400;letter-spacing:0.2px">Current</div>
<svg class="b" style="left:909.5px;top:179.5px;" width="25" height="25" viewBox="0 0 25 25"><circle cx="12.5" cy="12.5" r="12" fill="#626f86"/><path d="M8.5 8.5 L16.5 16.5 M16.5 8.5 L8.5 16.5" stroke="#fff" stroke-width="2.6" stroke-linecap="round"/></svg>
<svg class="b" style="left:961px;top:187px;" width="18" height="11" viewBox="0 0 18 11"><path d="M2 2 L9 9 L16 2" fill="none" stroke="#44546f" stroke-width="3.2" stroke-linecap="round" stroke-linejoin="round"/></svg>
<svg class="b" style="left:1012px;top:179px;" width="16" height="30" viewBox="0 0 16 30"><path d="M12.5 2 L5 28" stroke="#172b4d" stroke-width="3"/></svg>
<div class="t" style="left:1043px;top:179.3px;font-size:28px;line-height:28px;color:#0055cc;font-weight:400;letter-spacing:0.6px">Test vertical table</div>
<div class="b" style="left:1291px;top:190px;width:6px;height:6px;border-radius:50%;background:#172b4d"></div>
<div class="b" style="left:1300px;top:190px;width:6px;height:6px;border-radius:50%;background:#172b4d"></div>
<div class="b" style="left:1309px;top:190px;width:6px;height:6px;border-radius:50%;background:#172b4d"></div>
<svg class="b" style="left:1330px;top:179px;" width="16" height="30" viewBox="0 0 16 30"><path d="M12.5 2 L5 28" stroke="#172b4d" stroke-width="3"/></svg>
<div class="b" style="left:1351px;top:170px;width:438px;height:44px;border:2px solid #0055cc;border-radius:8px;box-sizing:border-box;background:#f7f8f9"></div>
<div class="t" style="left:1363px;top:179.3px;font-size:28px;line-height:28px;color:#0c66e4;font-weight:400;letter-spacing:-0.6px">TECHNICAL REQUIREMENT 001</div>
<svg class="b" style="left:1815px;top:174px;" width="31" height="36" viewBox="0 0 31 36"><path d="M1.9 26 V5 C1.9 3.3 3.3 1.9 5 1.9 H20" fill="none" stroke="#172b4d" stroke-width="3.8"/><rect x="7.9" y="7.9" width="20.2" height="25.9" rx="3" fill="none" stroke="#172b4d" stroke-width="3.8"/></svg>
<div class="t" style="left:608px;top:268.4px;font-size:52px;line-height:52px;color:#172b4d;font-weight:400;-webkit-text-stroke:1.3px;letter-spacing:0.5px">Requirement TECHNICAL REQUIREMENT 001</div>
<div class="b" style="left:609px;top:342px;width:1548px;height:1558px;border:2px solid #dadbe0;border-radius:12px;box-sizing:border-box"></div>
<svg class="b" style="left:656px;top:394px;" width="16" height="11" viewBox="0 0 16 11"><path d="M2 2 L8 8 L14 2" fill="none" stroke="#172b4d" stroke-width="3.2" stroke-linecap="round" stroke-linejoin="round"/></svg>
<div class="t" style="left:701px;top:382.1px;font-size:33px;line-height:33px;color:#172b4d;font-weight:400;-webkit-text-stroke:0.5px;letter-spacing:0.3px">Description</div>
<div class="t" style="left:641px;top:442.6px;font-size:28px;line-height:28px;color:#172b4d;font-weight:700;letter-spacing:0.5px">Sensor Integration</div>
<div class="b" style="left:2205px;top:342px;width:787px;height:464px;border:2px solid #dadbe0;border-radius:12px;box-sizing:border-box"></div>
<svg class="b" style="left:2253px;top:394px;" width="16" height="11" viewBox="0 0 16 11"><path d="M2 2 L8 8 L14 2" fill="none" stroke="#172b4d" stroke-width="3.2" stroke-linecap="round" stroke-linejoin="round"/></svg>
<div class="t" style="left:2299px;top:382.4px;font-size:33px;line-height:33px;color:#172b4d;font-weight:400;-webkit-text-stroke:0.5px;">Properties <span style="color:#626f86">(1)</span></div>
<div class="t" style="left:2239px;top:451.9px;font-size:28px;line-height:28px;color:#172b4d;font-weight:700;">Details</div>
<div class="t" style="left:2614px;top:450.3px;font-size:28px;line-height:28px;color:#172b4d;font-weight:400;letter-spacing:0.4px">: The car must integrate</div>
<div class="t" style="left:2614px;top:490.3px;font-size:28px;line-height:28px;color:#172b4d;font-weight:400;letter-spacing:0.4px">multiple sensors (LIDAR</div>
<div class="t" style="left:2614px;top:570.3px;font-size:28px;line-height:28px;color:#172b4d;font-weight:400;letter-spacing:0.4px">cameras, ultrasonic) to</div>
<div class="t" style="left:2614px;top:610.3px;font-size:28px;line-height:28px;color:#172b4d;font-weight:400;letter-spacing:0.4px">provide comprehensive</div>
<div class="t" style="left:2614px;top:650.3px;font-size:28px;line-height:28px;color:#172b4d;font-weight:400;letter-spacing:0.4px">environmental awareness</div>
<div class="t" style="left:2614px;top:690.3px;font-size:28px;line-height:28px;color:#172b4d;font-weight:400;letter-spacing:0.4px">and redundancy for</div>
<div class="t" style="left:2614px;top:730.3px;font-size:28px;line-height:28px;color:#172b4d;font-weight:400;letter-spacing:0.4px">safety.</div>
<div class="b" style="left:2615px;top:524px;width:185px;height:40px;border:2px solid #0055cc;border-radius:8px;box-sizing:border-box"></div>
<svg class="b" style="left:2627px;top:532px;" width="22" height="22" viewBox="0 0 22 22"><path d="M4 18 L17 5 M7 4.5 H17.5 V15" fill="none" stroke="#0c66e4" stroke-width="2.6" stroke-linecap="round" stroke-linejoin="round"/></svg>
<div class="t" style="left:2655px;top:530.3px;font-size:28px;line-height:28px;color:#0c66e4;font-weight:400;letter-spacing:-0.5px">LIDAR 001</div>
<div class="t" style="left:2801px;top:530.3px;font-size:28px;line-height:28px;color:#172b4d;font-weight:400;letter-spacing:0.3px">, radar,</div>
<div class="b" style="left:2205px;top:838px;width:787px;height:250px;border:2px solid #dadbe0;border-radius:12px;box-sizing:border-box"></div>
<svg class="b" style="left:2253px;top:897px;" width="16" height="11" viewBox="0 0 16 11"><path d="M2 2 L8 8 L14 2" fill="none" stroke="#172b4d" stroke-width="3.2" stroke-linecap="round" stroke-linejoin="round"/></svg>
<div class="t" style="left:2299px;top:886.1px;font-size:33px;line-height:33px;color:#172b4d;font-weight:400;-webkit-text-stroke:0.5px;">External properties</div>
<svg class="b" style="left:2866px;top:883px;" width="40" height="40" viewBox="0 0 40 40"><circle cx="20" cy="20" r="20" fill="#a5adba"/><path d="M14.5 15 C 14.5 11.5, 17 9.5, 20 9.5 C 23 9.5, 25.5 11.5, 25.5 14.5 C 25.5 18.5, 20 19, 20 24" fill="none" stroke="#fff" stroke-width="3.6" stroke-linecap="round"/><circle cx="20" cy="30" r="2.4" fill="#fff"/></svg>
<svg class="b" style="left:2916px;top:884px;" width="36" height="36" viewBox="0 0 36 36"><path d="M31.25 20.59 L34.85 22.71 L33.25 26.58 L29.20 25.54 L25.54 29.20 L26.58 33.25 L22.71 34.85 L20.59 31.25 L15.41 31.25 L13.29 34.85 L9.42 33.25 L10.46 29.20 L6.80 25.54 L2.75 26.58 L1.15 22.71 L4.75 20.59 L4.75 15.41 L1.15 13.29 L2.75 9.42 L6.80 10.46 L10.46 6.80 L9.42 2.75 L13.29 1.15 L15.41 4.75 L20.59 4.75 L22.71 1.15 L26.58 2.75 L25.54 6.80 L29.20 10.46 L33.25 9.42 L34.85 13.29 L31.25 15.41 Z" fill="#a5adba"/><circle cx="18" cy="18" r="9.5" fill="#fff"/></svg>
<div class="b" style="left:2239px;top:970px;width:101px;height:64px;background:#f1f2f4;border-radius:6px"></div>
<div class="t" style="left:2263.5px;top:988.9px;font-size:28px;line-height:28px;color:#172b4d;font-weight:400;-webkit-text-stroke:0.5px;letter-spacing:0.3px">Add</div>
<div class="b" style="left:2205px;top:1121px;width:787px;height:187px;border:2px solid #dadbe0;border-radius:12px;box-sizing:border-box"></div>
<svg class="b" style="left:2253px;top:1173px;" width="16" height="11" viewBox="0 0 16 11"><path d="M2 2 L8 8 L14 2" fill="none" stroke="#172b4d" stroke-width="3.2" stroke-linecap="round" stroke-linejoin="round"/></svg>
<div class="t" style="left:2299px;top:1161.1px;font-size:33px;line-height:33px;color:#172b4d;font-weight:400;-webkit-text-stroke:0.5px;">Dependencies <span style="color:#626f86">(1)</span></div>
<div class="b" style="left:2208px;top:1198px;width:598px;height:86px;border:5px solid #fb2619;box-sizing:border-box"></div>
<div class="b" style="left:2239px;top:1229px;width:192px;height:32px;background:#3e4b64;border-radius:6px"></div>
<div class="t" style="left:2248px;top:1234.0px;font-size:22px;line-height:22px;color:#ffffff;font-weight:700;letter-spacing:0.4px">&lt; DEPENDENCY</div>
<div class="b" style="left:2615px;top:1222px;width:157px;height:44px;border:2px solid #0055cc;border-radius:8px;box-sizing:border-box;background:#f7f8f9"></div>
<div class="t" style="left:2627px;top:1230.8px;font-size:28px;line-height:28px;color:#0c66e4;font-weight:400;letter-spacing:-0.5px">LIDAR 001</div>
<div class="b" style="left:2205px;top:1340px;width:787px;height:184px;border:2px solid #dadbe0;border-radius:12px;box-sizing:border-box"></div>
<svg class="b" style="left:2253px;top:1392px;" width="16" height="11" viewBox="0 0 16 11"><path d="M2 2 L8 8 L14 2" fill="none" stroke="#172b4d" stroke-width="3.2" stroke-linecap="round" stroke-linejoin="round"/></svg>
<div class="t" style="left:2299px;top:1380.1px;font-size:33px;line-height:33px;color:#172b4d;font-weight:400;-webkit-text-stroke:0.5px;">Page links <span style="color:#626f86">(1)</span></div>
<div class="b" style="left:2239px;top:1448px;width:127px;height:32px;background:#1f845a;border-radius:6px"></div>
<div class="t" style="left:2247px;top:1454.4px;font-size:22px;line-height:22px;color:#ffffff;font-weight:700;letter-spacing:0.2px">ORIGINAL</div>
<div class="t" style="left:2624px;top:1448.9px;font-size:28px;line-height:28px;color:#0055cc;font-weight:400;letter-spacing:0.6px">Test vertical table</div>
<div class="b" style="left:2205px;top:1557px;width:787px;height:130px;border:2px solid #dadbe0;border-radius:12px;box-sizing:border-box"></div>
<svg class="b" style="left:2256px;top:1614px;" width="11" height="16" viewBox="0 0 11 16"><path d="M2 2 L8 8 L2 14" fill="none" stroke="#172b4d" stroke-width="3.2" stroke-linecap="round" stroke-linejoin="round"/></svg>
<div class="t" style="left:2299px;top:1605.7px;font-size:33px;line-height:33px;color:#172b4d;font-weight:400;-webkit-text-stroke:0.5px;">Jira <span style="color:#626f86">(0)</span></div>
<div class="t" style="left:2769px;top:1608.3px;font-size:28px;line-height:28px;color:#172b4d;font-weight:400;-webkit-text-stroke:0.5px;letter-spacing:0.4px">Create issue</div>
<div class="b" style="left:2205px;top:1721px;width:787px;height:179px;border:2px solid #dadbe0;border-radius:12px;box-sizing:border-box"></div>
<svg class="b" style="left:2253px;top:1775px;" width="16" height="11" viewBox="0 0 16 11"><path d="M2 2 L8 8 L14 2" fill="none" stroke="#172b4d" stroke-width="3.2" stroke-linecap="round" stroke-linejoin="round"/></svg>
<div class="t" style="left:2299px;top:1766.1px;font-size:33px;line-height:33px;color:#172b4d;font-weight:400;-webkit-text-stroke:0.5px;">Requirement types <span style="color:#626f86">(0)</span></div>
<svg class="b" style="left:2916px;top:1760px;" width="36" height="36" viewBox="0 0 36 36"><path d="M31.25 20.59 L34.85 22.71 L33.25 26.58 L29.20 25.54 L25.54 29.20 L26.58 33.25 L22.71 34.85 L20.59 31.25 L15.41 31.25 L13.29 34.85 L9.42 33.25 L10.46 29.20 L6.80 25.54 L2.75 26.58 L1.15 22.71 L4.75 20.59 L4.75 15.41 L1.15 13.29 L2.75 9.42 L6.80 10.46 L10.46 6.80 L9.42 2.75 L13.29 1.15 L15.41 4.75 L20.59 4.75 L22.71 1.15 L26.58 2.75 L25.54 6.80 L29.20 10.46 L33.25 9.42 L34.85 13.29 L31.25 15.41 Z" fill="#a5adba"/><circle cx="18" cy="18" r="9.5" fill="#fff"/></svg>
<div class="b" style="left:3035px;top:1805px;width:20px;height:38px;background:#505252;border:2px solid #6b6b6b;border-radius:3px;box-sizing:border-box;box-shadow:0 0 12px rgba(0,0,0,0.12)"></div>
<script>(function(){var w=window.innerWidth;if(w&&Math.abs(w-3046)>4){var b=document.body;b.style.transformOrigin='0 0';b.style.transform='scale('+(w/3046)+')';}})();</script>
</body></html>
